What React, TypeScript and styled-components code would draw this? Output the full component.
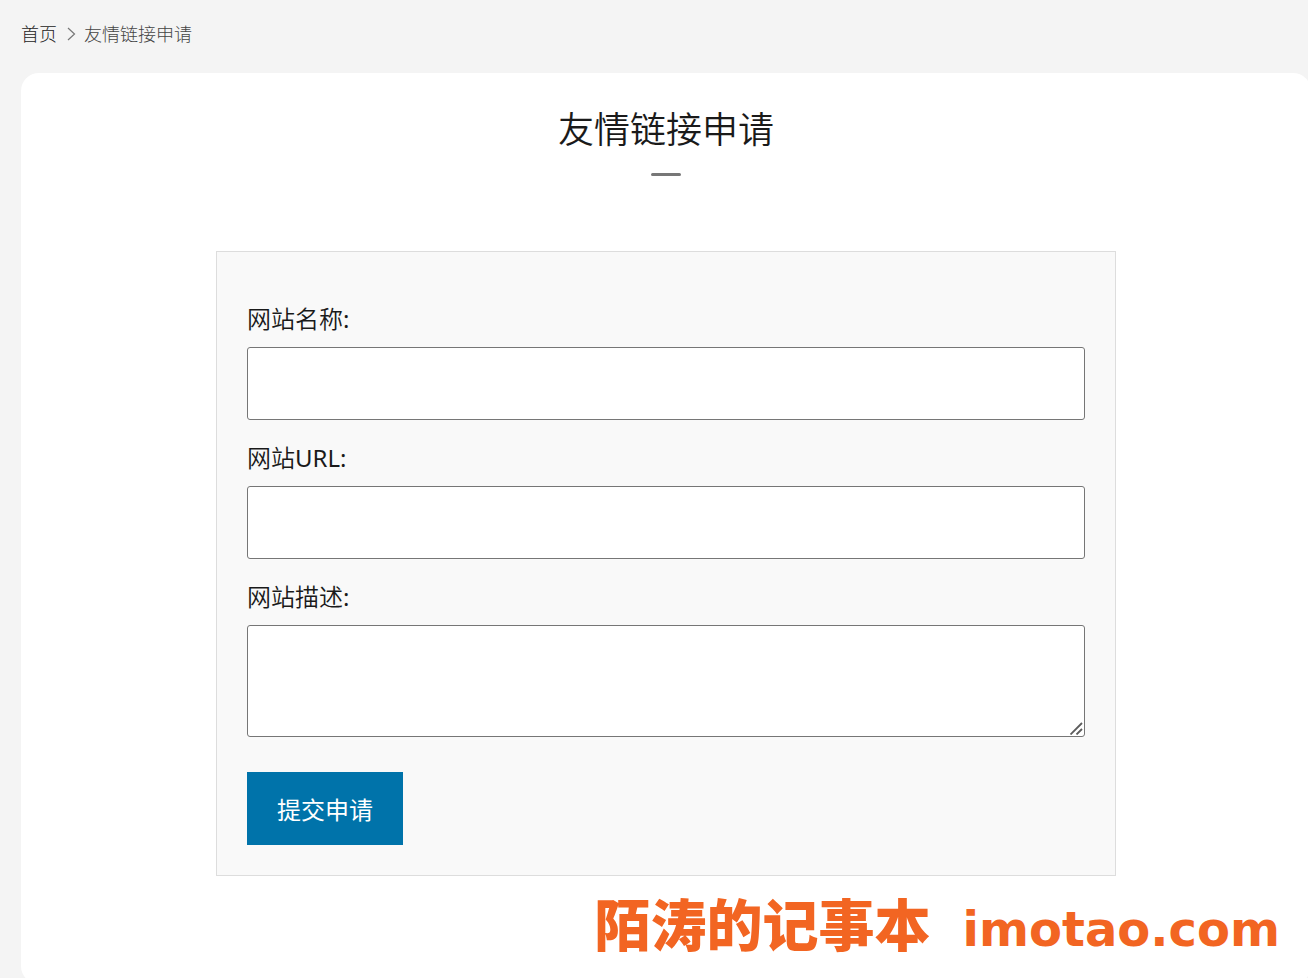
import React from "react";
import styled, { createGlobalStyle } from "styled-components";

const GlobalStyle = createGlobalStyle`
  *, *::before, *::after { box-sizing: border-box; }
  body {
    margin: 0;
    background: #f4f4f4;
    color: #1a1a1a;
    font-family: "Noto Sans", "Noto Sans CJK SC", sans-serif;
    font-weight: 350;
  }
`;

const Page = styled.div`
  display: flex;
  flex-direction: column;
  min-height: 100vh;
  overflow: hidden;
  position: relative;
`;

const Breadcrumb = styled.nav`
  display: flex;
  align-items: center;
  gap: 8px;
  padding: 20px 21px 25px;
  font-size: 18px;
  font-weight: 300;
  line-height: 28px;
  color: #444;
`;

const HomeLink = styled.a`
  color: #222;
  text-decoration: none;
`;

const Card = styled.main`
  flex: 1;
  margin: 0 -3px -5px 21px;
  padding: 30px 30px 108px;
  background: #fff;
  border-radius: 18px;
`;

const Title = styled.h1`
  margin: 0;
  font-size: 36px;
  line-height: 54px;
  font-weight: 350;
  text-align: center;
`;

const TitleBar = styled.div`
  width: 30px;
  height: 3px;
  margin: 16px auto 75px;
  border-radius: 2px;
  background: #777;
`;

const Form = styled.form`
  display: flex;
  flex-direction: column;
  gap: 20px;
  max-width: 900px;
  margin: 0 auto;
  padding: 49px 30px 30px;
  background: #f9f9f9;
  border: 1px solid #ddd;
`;

const Field = styled.div`
  display: flex;
  flex-direction: column;
  gap: 10px;
`;

const Label = styled.label`
  font-size: 24px;
  line-height: 36px;
`;

const Latin = styled.span`
  font-weight: 400;
`;

const Input = styled.input`
  width: 100%;
  height: 73px;
  padding: 10px 15px;
  border: 1px solid #767676;
  border-radius: 3px;
  background: #fff;
  font: inherit;
  font-size: 24px;
`;

const TextareaBox = styled.div`
  position: relative;
`;

const Textarea = styled.textarea`
  display: block;
  width: 100%;
  height: 112px;
  padding: 10px 15px;
  border: 1px solid #767676;
  border-radius: 3px;
  background: #fff;
  font: inherit;
  font-size: 24px;
  resize: vertical;

  &::-webkit-resizer {
    background: transparent;
  }
`;

const ResizeGrip = styled.svg`
  position: absolute;
  right: 2px;
  bottom: 2px;
  pointer-events: none;
`;

const SubmitButton = styled.button`
  align-self: flex-start;
  height: 73px;
  margin-top: 15px;
  padding: 0 30px;
  border: 0;
  background: #0073aa;
  color: #fff;
  font: inherit;
  font-size: 24px;
  font-weight: 400;
`;

const Watermark = styled.div`
  position: absolute;
  right: 28px;
  bottom: 10px;
  display: flex;
  align-items: baseline;
  gap: 32px;
  color: #f26522;
  line-height: 80px;
  white-space: nowrap;
  pointer-events: none;
`;

const SiteName = styled.span`
  font-family: "Noto Sans CJK SC", sans-serif;
  font-size: 56px;
  font-weight: 900;
`;

const SiteDomain = styled.span`
  font-family: "DejaVu Sans", sans-serif;
  font-size: 48px;
  font-weight: 700;
`;

export default function App() {
  return (
    <Page>
      <GlobalStyle />
      <Breadcrumb aria-label="breadcrumb">
        <HomeLink href="#">首页</HomeLink>
        <svg width="11" height="16" viewBox="0 0 11 16" fill="none" stroke="#777" strokeWidth="1.2" aria-hidden="true">
          <path d="M3 2L9.5 8L3 14" />
        </svg>
        <span>友情链接申请</span>
      </Breadcrumb>
      <Card>
        <Title>友情链接申请</Title>
        <TitleBar />
        <Form onSubmit={(e: React.FormEvent) => e.preventDefault()}>
          <Field>
            <Label htmlFor="site-name">网站名称<Latin>:</Latin></Label>
            <Input id="site-name" type="text" />
          </Field>
          <Field>
            <Label htmlFor="site-url">网站<Latin>URL:</Latin></Label>
            <Input id="site-url" type="url" />
          </Field>
          <Field>
            <Label htmlFor="site-desc">网站描述<Latin>:</Latin></Label>
            <TextareaBox>
              <Textarea id="site-desc" />
              <ResizeGrip width="13" height="13" viewBox="0 0 13 13" fill="none" stroke="#5c5c5c" strokeWidth="1.8" aria-hidden="true">
                <path d="M0.5 12.5L12 1M6.5 12.5L12 7" />
              </ResizeGrip>
            </TextareaBox>
          </Field>
          <SubmitButton type="submit">提交申请</SubmitButton>
        </Form>
      </Card>
      <Watermark>
        <SiteName>陌涛的记事本</SiteName>
        <SiteDomain>imotao.com</SiteDomain>
      </Watermark>
    </Page>
  );
}
